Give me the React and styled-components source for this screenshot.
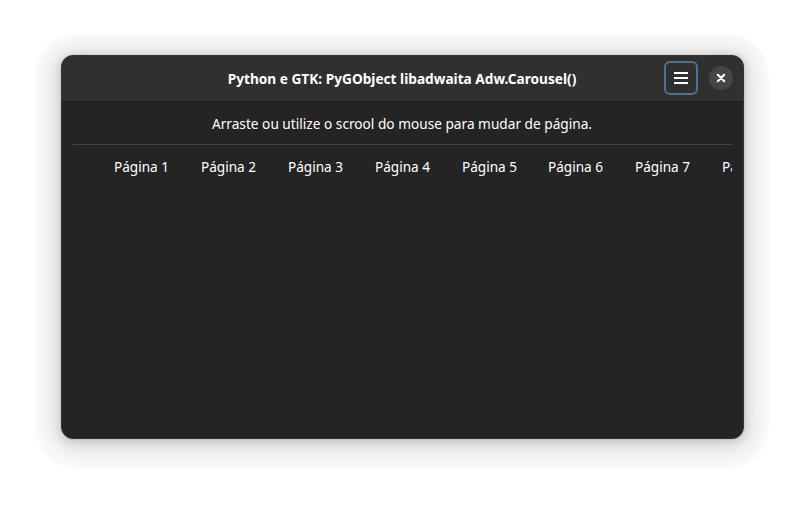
import React from "react";
import styled, { createGlobalStyle } from "styled-components";

const Global = createGlobalStyle`
  body { margin: 0; background: #fff; }
  * { box-sizing: border-box; }
`;
const Desktop = styled.main`
  height: 506px;
  padding: 34px 36px 37px 35px;
  overflow: hidden;
  font: 15px "Noto Sans", sans-serif;
  color: #fff;
`;
const Halo = styled.div`
  width: 734px;
  height: 435px;
  padding: 21px 25px 30px 26px;
  border-radius: 42px;
  background: #fbfbfb;
  overflow: hidden;
`;
const Window = styled.section`
  height: 384px;
  width: 683px;
  border: 1px solid #353535;
  border-radius: 12px;
  background: #242424;
  box-shadow: 0 0 0 1px rgba(0,0,0,.05), 0 2px 8px 1px rgba(0,0,0,.12), 0 3px 22px 9px rgba(0,0,0,.12);
`;
const HeaderBar = styled.header`
  height: 46px;
  padding-bottom: 1px;
  display: grid;
  grid-template-columns: 80px 1fr 79px;
  align-items: center;
  border-radius: 11px 11px 0 0;
  background: #303030;
  border-bottom: 1px solid #1e1e1e;
`;
const Title = styled.h1`
  grid-column: 2;
  margin: 0 2px 1px 0;
  font-size: 15px;
  font-weight: 700;
  text-align: center;
  white-space: nowrap;
  transform: scaleX(.911);
`;
const Controls = styled.div`
  display: flex;
  align-items: center;
  gap: 11px;
`;
const MenuButton = styled.button`
  width: 34px; height: 34px; padding: 0;
  display: grid; place-items: center;
  border: 2px solid #4f7096;
  border-radius: 6px;
  background: transparent;
  color: #fff;
`;
const CloseButton = styled.button`
  width: 24px; height: 24px; padding: 0;
  display: grid; place-items: center;
  border: 0; border-radius: 50%;
  background: #454545;
  color: #fff;
`;
const Content = styled.div`padding: 11px 11px 0;`;
const Hint = styled.p`
  margin: 0 1px 0 0; height: 20px; line-height: 20px; text-align: center;
  transform: scaleX(.911);
`;
const Separator = styled.hr`
  margin: 11px 0 11px; height: 1px; border: 0; background: #454545;
`;
const Carousel = styled.div`
  display: flex; padding-left: 41px; overflow: hidden; line-height: 20px;
`;
const Page = styled.span`
  flex: none; width: 86.9px; white-space: nowrap;
  transform: scaleX(.905); transform-origin: left;
`;

export default function App() {
  return (
    <Desktop>
      <Global />
      <Halo>
        <Window>
          <HeaderBar>
            <Title>Python e GTK: PyGObject libadwaita Adw.Carousel()</Title>
            <Controls>
              <MenuButton aria-label="Menu">
                <svg width="16" height="16"><path d="M1 2h14v2H1zM1 7h14v2H1zM1 12h14v2H1z" fill="currentColor" /></svg>
              </MenuButton>
              <CloseButton aria-label="Fechar">
                <svg width="16" height="16"><path d="M4.8 4.8l6.4 6.4M11.2 4.8l-6.4 6.4" stroke="currentColor" strokeWidth="2.2" strokeLinecap="round" /></svg>
              </CloseButton>
            </Controls>
          </HeaderBar>
          <Content>
            <Hint>Arraste ou utilize o scrool do mouse para mudar de página.</Hint>
            <Separator />
            <Carousel>
              {[1, 2, 3, 4, 5, 6, 7, 8].map((n) => <Page key={n}>Página {n}</Page>)}
            </Carousel>
          </Content>
        </Window>
      </Halo>
    </Desktop>
  );
}
